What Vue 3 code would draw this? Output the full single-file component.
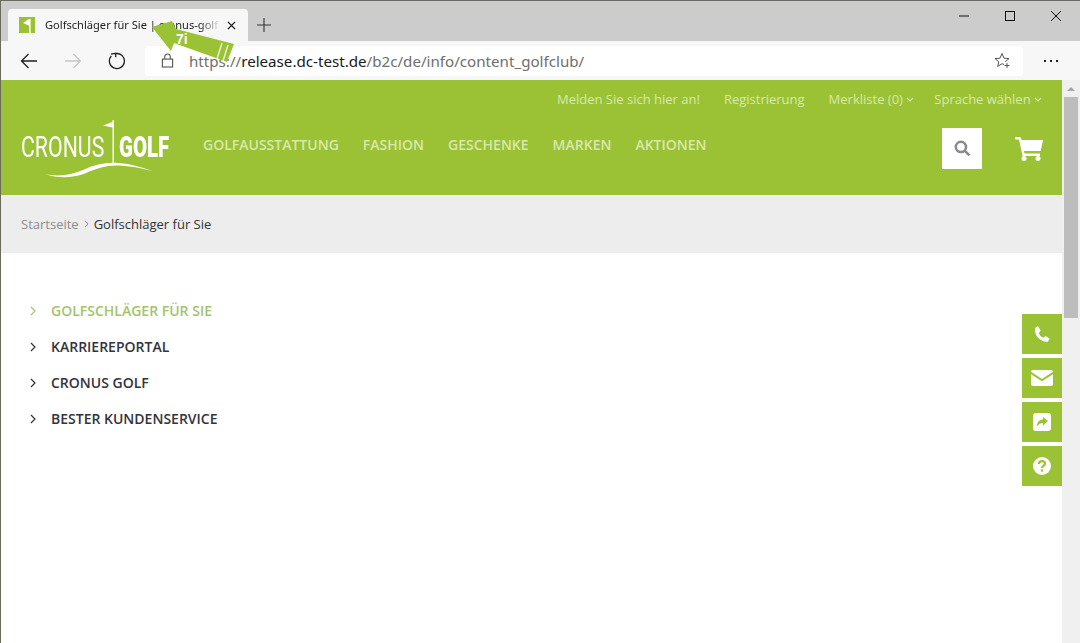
<template>
  <div class="window">
    <!-- browser chrome -->
    <div class="tabstrip">
      <div class="tab">
        <svg class="favicon" viewBox="0 0 16 16">
          <rect width="16" height="16" fill="#9ac234" />
          <path d="M10 2h1.600v14H10V8.600L4 6z" fill="#fff" />
        </svg>
        <span class="tab-title">Golfschläger für Sie | cronus-golf</span>
        <svg class="tab-close" viewBox="0 0 10 10">
          <path d="M1 1l8 8M9 1l-8 8" />
        </svg>
      </div>
      <svg class="new-tab" viewBox="0 0 14 14">
        <path d="M7 0v14M0 7h14" />
      </svg>
      <div class="window-controls">
        <svg viewBox="0 0 12 12"><path d="M1 6h10" /></svg>
        <svg viewBox="0 0 12 12"><rect x="1.500" y="1.500" width="9" height="9" /></svg>
        <svg viewBox="0 0 12 12"><path d="M1 1l10 10M11 1L1 11" /></svg>
      </div>
    </div>

    <div class="toolbar">
      <svg class="nav-icon" viewBox="0 0 18 18"><path d="M17 9H1.500M8.500 2L1.500 9l7 7" /></svg>
      <svg class="nav-icon disabled" viewBox="0 0 18 18"><path d="M1 9h15.500M9.500 2l7 7-7 7" /></svg>
      <svg class="nav-icon" viewBox="0 0 18 18"><path d="M7.700 1.600A7.500 7.500 0 1 1 3.300 4M3 2.200l4.700-.9v3.900" /></svg>
      <div class="address">
        <svg class="lock" viewBox="0 0 14 16">
          <rect x="1.500" y="6.500" width="11" height="8.500" />
          <path d="M4 6.500V4a3 3 0 0 1 6 0v2.500" />
        </svg>
        <span class="url">https://<b>release.dc-test.de</b>/b2c/de/info/content_golfclub/</span>
        <svg class="star" viewBox="0 0 17 17">
          <path d="M10 12.500L8 11.700 3.700 14.400 4.800 9.800 1 6.600 6 6.200 8 1.500 10 6.200 15 6.600 11.200 9.800" />
          <path d="M13 11v5M10.500 13.500h5" />
        </svg>
      </div>
      <div class="more"><i></i><i></i><i></i></div>
    </div>

    <!-- page -->
    <div class="viewport">
      <div class="page">
        <header class="site-header">
          <div class="meta-nav">
            <a>Melden Sie sich hier an!</a>
            <a>Registrierung</a>
            <a>Merkliste (0) <svg class="caret" viewBox="0 0 8 5"><path d="M1 1l3 3 3-3" /></svg></a>
            <a>Sprache wählen <svg class="caret" viewBox="0 0 8 5"><path d="M1 1l3 3 3-3" /></svg></a>
          </div>
          <div class="main-row">
            <div class="logo">
              <span class="logo-light">CRONUS</span>
              <span class="logo-bold">GOLF</span>
              <svg class="logo-mark" viewBox="0 0 150 62">
                <path d="M91.500 0H93v43h-1.500zM91.500 2L82 5.500l9.500 2z" fill="#fff" />
                <path d="M24 54c14 3 26 1 38-4 12-6 24-8 36-7 12 1 23 4 33 8-11-3-22-5-33-5.500-12-.5-23 3-34 8-14 5-27 5-40 .5z" fill="#fff" />
              </svg>
            </div>
            <nav class="main-nav">
              <a v-for="item in mainNav" :key="item">{{ item }}</a>
            </nav>
            <button class="search-btn">
              <svg viewBox="0 0 16 16"><circle cx="6.500" cy="6.500" r="4.800" /><path d="M10 10l4.500 4.500" /></svg>
            </button>
            <svg class="cart" viewBox="0 0 28 24">
              <path d="M0 0h4.500c.8 0 1.300.4 1.500 1.100L6.500 3H28l-2.300 11H9l.5 2.500H25V19H7.500L4 2.500H0z" fill="#fff" />
              <circle cx="9" cy="21.500" r="2.500" fill="#fff" />
              <circle cx="23" cy="21.500" r="2.500" fill="#fff" />
            </svg>
          </div>
        </header>

        <div class="breadcrumb">
          <span class="crumb-link">Startseite</span>
          <svg class="crumb-sep" viewBox="0 0 6 10"><path d="M1 1l4 4-4 4" /></svg>
          <span>Golfschläger für Sie</span>
        </div>

        <ul class="side-menu">
          <li v-for="(item, i) in menu" :key="item" :class="{ active: i === 0 }">
            <svg viewBox="0 0 6 10"><path d="M1 1l4 4-4 4" /></svg>
            {{ item }}
          </li>
        </ul>
      </div>

      <div class="scrollbar">
        <div class="scroll-up"></div>
        <div class="scroll-thumb"></div>
      </div>

      <!-- floating contact buttons -->
      <div class="quick-links">
        <div class="quick-btn">
          <svg viewBox="0 0 20 20"><path d="M5.500 1.500L2.500 3C1.800 8 3 11.500 6 14.500s6.500 4.400 10.500 4l2-3.200-4.500-3-2.200 2c-2.700-1.200-4.400-3-5.300-5.500L8.500 6z" fill="#fff" /></svg>
        </div>
        <div class="quick-btn">
          <svg viewBox="0 0 22 16">
            <path d="M2 0h18c1 0 2 .8 2 1.800L11 9 0 1.800C0 .8 1 0 2 0z" fill="#fff" />
            <path d="M0 4.200L11 11.300 22 4.200V14c0 1.100-.9 2-2 2H2c-1.100 0-2-.9-2-2z" fill="#fff" />
          </svg>
        </div>
        <div class="quick-btn">
          <svg viewBox="0 0 18 18">
            <path fill-rule="evenodd" d="M3 0h12a3 3 0 0 1 3 3v12a3 3 0 0 1-3 3H3a3 3 0 0 1-3-3V3a3 3 0 0 1 3-3zM10 4v2.500C6.500 6.800 4 8.800 4 13.500 5.500 11 7.500 10 10 10v2.500L15 8z" fill="#fff" />
          </svg>
        </div>
        <div class="quick-btn">
          <svg viewBox="0 0 18 18">
            <circle cx="9" cy="9" r="9" fill="#fff" />
            <path d="M6 7c0-1.800 1.300-2.800 3-2.800s3 1 3 2.500c0 2.200-3 2.200-3 4.300" fill="none" stroke="#9ac234" stroke-width="2.200" />
            <rect x="7.900" y="12.400" width="2.200" height="2.200" fill="#9ac234" />
          </svg>
        </div>
      </div>
    </div>

    <!-- annotation arrow over the tab -->
    <svg class="arrow" viewBox="0 0 1080 80">
      <path d="M152 27L172 21 176 29 234 44 227 62 174 43 171 51z" fill="#9ac234" />
      <path d="M222 43L217 59M228 45L223 61" stroke="#fff" stroke-width="1.400" opacity=".8" />
      <text x="176" y="44" class="arrow-label">7i</text>
    </svg>
  </div>
</template>

<script setup>
const mainNav = ["GOLFAUSSTATTUNG", "FASHION", "GESCHENKE", "MARKEN", "AKTIONEN"];
const menu = [
  "GOLFSCHLÄGER FÜR SIE",
  "KARRIEREPORTAL",
  "CRONUS GOLF",
  "BESTER KUNDENSERVICE",
];
</script>

<style>
html,
body {
  margin: 0;
  overflow: hidden;
}
</style>

<style scoped>
.window {
  position: relative;
  width: 1080px;
  height: 643px;
  box-sizing: border-box;
  border-top: 1px solid #6b6b62;
  border-left: 1px solid #6b6b5a;
  background: #fff;
  font-family: "Open Sans", sans-serif;
  overflow: hidden;
}

/* chrome */
.tabstrip {
  height: 40px;
  background: #cccccc;
  display: flex;
  align-items: flex-end;
  padding-left: 7px;
}
.tab {
  width: 240px;
  height: 32px;
  background: #f7f7f7;
  border-radius: 4px 4px 0 0;
  display: flex;
  align-items: center;
  padding: 0 10px 0 11px;
  box-sizing: border-box;
}
.favicon {
  width: 16px;
  height: 16px;
  flex: none;
}
.tab-title {
  margin-left: 10px;
  width: 176px;
  flex: none;
  position: relative;
  top: -1px;
  overflow: hidden;
  white-space: nowrap;
  font-family: "Noto Sans", sans-serif;
  font-size: 11.100px;
  color: #222;
  -webkit-mask-image: linear-gradient(90deg, #000 88%, transparent);
  mask-image: linear-gradient(90deg, #000 88%, transparent);
}
.tab-close {
  width: 9px;
  height: 9px;
  margin-left: 6px;
  flex: none;
  fill: none;
  stroke: #111;
  stroke-width: 1.400;
}
.new-tab {
  width: 14px;
  height: 14px;
  margin: 0 0 9px 9px;
  fill: none;
  stroke: #333;
  stroke-width: 1.100;
}
.window-controls {
  margin-left: auto;
  align-self: flex-start;
  display: flex;
  gap: 34px;
  padding: 9px 18px 0 0;
}
.window-controls svg {
  width: 12px;
  height: 12px;
  fill: none;
  stroke: #111;
  stroke-width: 1;
}
.toolbar {
  height: 39px;
  background: #f7f7f7;
  display: flex;
  align-items: center;
  padding-left: 19px;
  box-sizing: border-box;
  position: relative;
}
.nav-icon {
  width: 18px;
  height: 18px;
  margin-right: 26px;
  flex: none;
  fill: none;
  stroke: #222;
  stroke-width: 1.300;
}
.nav-icon.disabled {
  stroke: #c6c6c6;
}
.address {
  margin-left: -7px;
  width: 878px;
  height: 30px;
  background: #fff;
  border-radius: 4px;
  display: flex;
  align-items: center;
  padding: 0 12px 0 16px;
  box-sizing: border-box;
}
.lock {
  width: 13px;
  height: 15px;
  flex: none;
  fill: none;
  stroke: #555;
  stroke-width: 1.200;
}
.url {
  margin-left: 15px;
  font-family: "Noto Sans", sans-serif;
  font-size: 15.150px;
  color: #6f6f6f;
  white-space: nowrap;
}
.url b {
  font-weight: 400;
  color: #1a1a1a;
}
.star {
  margin-left: auto;
  width: 17px;
  height: 17px;
  fill: none;
  stroke: #555;
  stroke-width: 1;
}
.more {
  margin-left: 21px;
  display: flex;
  gap: 4px;
}
.more i {
  width: 2px;
  height: 2px;
  background: #222;
}

/* page */
.viewport {
  display: flex;
  height: 563px;
}
.page {
  width: 1061px;
  flex: none;
}
.site-header {
  height: 115px;
  background: #9ac234;
  box-sizing: border-box;
}
.meta-nav {
  display: flex;
  justify-content: flex-end;
  gap: 24px;
  padding: 10px 20px 0 0;
  font-size: 13px;
  line-height: 18px;
  color: #d9e8ac;
}
.meta-nav a:last-child {
  margin-left: -4px;
}
.caret {
  width: 8px;
  height: 5px;
  vertical-align: 2px;
  fill: none;
  stroke: #d9e8ac;
  stroke-width: 1.200;
}
.main-row {
  display: flex;
  align-items: flex-start;
  padding-top: 10px;
}
.logo {
  position: relative;
  width: 150px;
  height: 62px;
  margin: 2px 0 0 20px;
  flex: none;
  color: #fff;
}
.logo-mark {
  position: absolute;
  left: 0;
  top: 0;
  width: 150px;
  height: 62px;
}
.logo-light,
.logo-bold {
  position: absolute;
  top: 12px;
  font-family: "Roboto", sans-serif;
  font-size: 30px;
  line-height: 30px;
  white-space: nowrap;
  transform-origin: left center;
}
.logo-light {
  left: 0;
  font-weight: 400;
  transform: scaleX(0.71);
}
.logo-bold {
  left: 98px;
  font-weight: 900;
  transform: scaleX(0.68);
}
.main-nav {
  display: flex;
  gap: 24px;
  margin: 17px 0 0 32px;
  font-size: 14px;
  font-weight: 600;
  line-height: 20px;
  color: #d9e8ac;
}
.search-btn {
  margin: 10px 0 0 auto;
  width: 40px;
  height: 41px;
  padding: 0;
  border: 0;
  background: #fff;
  display: flex;
  align-items: center;
  justify-content: center;
}
.search-btn svg {
  width: 17px;
  height: 17px;
  fill: none;
  stroke: #8a8a8a;
  stroke-width: 2.400;
}
.cart {
  width: 28px;
  height: 24px;
  margin: 19px 19px 0 33px;
  flex: none;
}
.breadcrumb {
  height: 58px;
  background: #ededed;
  display: flex;
  align-items: center;
  padding-left: 20px;
  font-size: 13px;
  color: #333;
}
.crumb-link {
  color: #8c8c8c;
}
.crumb-sep {
  width: 5px;
  height: 8px;
  margin: 0 5px;
  fill: none;
  stroke: #777;
  stroke-width: 1.100;
}
.side-menu {
  list-style: none;
  margin: 40px 0 0;
  padding: 0 0 0 29px;
  font-size: 14px;
  font-weight: 600;
  color: #33333d;
}
.side-menu li {
  height: 36px;
  line-height: 36px;
  display: flex;
  align-items: center;
}
.side-menu svg {
  width: 6px;
  height: 10px;
  margin-right: 15px;
  fill: none;
  stroke: currentColor;
  stroke-width: 1.200;
}
.side-menu li.active {
  color: #a3c46b;
}
.scrollbar {
  flex: 1;
  background: #f0f0f0;
}
.scroll-up {
  height: 17px;
  position: relative;
}
.scroll-up::after {
  content: "";
  position: absolute;
  left: 5px;
  top: 7px;
  border: 4px solid transparent;
  border-top: 0;
  border-bottom: 4px solid #a6a6a6;
}
.scroll-thumb {
  width: 14px;
  height: 221px;
  margin: 0 auto;
  background: #bdbdbd;
}

.quick-links {
  position: absolute;
  right: 18px;
  top: 313px;
  display: flex;
  flex-direction: column;
  gap: 4px;
}
.quick-btn {
  width: 40px;
  height: 40px;
  background: #9ac234;
  display: flex;
  align-items: center;
  justify-content: center;
}
.quick-btn svg {
  width: 18px;
  height: 18px;
}
.quick-btn:nth-child(2) svg {
  width: 22px;
  height: 16px;
}
.arrow {
  position: absolute;
  left: -1px;
  top: -1px;
  width: 1080px;
  height: 80px;
  pointer-events: none;
}
.arrow-label {
  font-family: "Liberation Sans", sans-serif;
  font-size: 14px;
  font-weight: 700;
  fill: #fff;
}
</style>
